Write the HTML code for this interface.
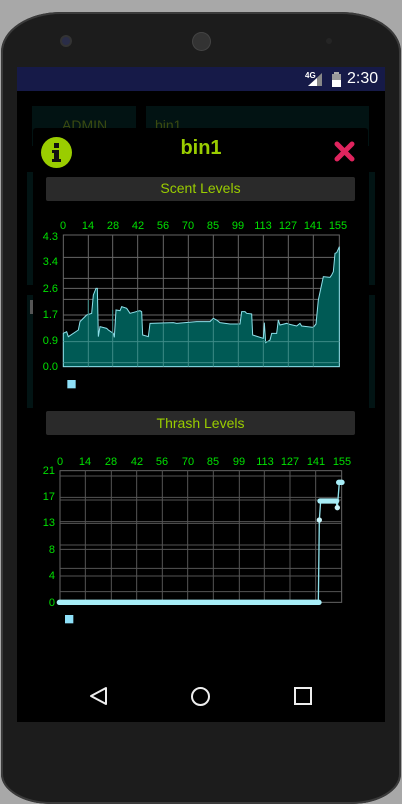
<!DOCTYPE html>
<html><head><meta charset="utf-8"><style>
html,body{margin:0;padding:0;width:402px;height:804px;overflow:hidden;background:#a8a8a8;font-family:"Liberation Sans",sans-serif}
.abs{position:absolute}
</style></head><body>
<div class="abs" style="left:0;top:0;width:402px;height:804px;background:#a8a8a8"></div>
<div class="abs" style="left:1px;top:12px;width:400px;height:792px;background:#1c1c1c;border-radius:60px 60px 50px 50px/40px 40px 30px 30px;box-shadow:inset 0 0 0 2px #3a3a3a"></div>
<div class="abs" style="left:62px;top:37px;width:8px;height:8px;border-radius:50%;background:#2a2d48;box-shadow:0 0 0 2px #333"></div>
<div class="abs" style="left:193px;top:33px;width:17px;height:17px;border-radius:50%;background:#333;box-shadow:0 0 0 1px #444"></div>
<div class="abs" style="left:326px;top:38px;width:6px;height:6px;border-radius:50%;background:#252525"></div>
<!-- screen -->
<div class="abs" style="left:17px;top:67px;width:368px;height:655px;background:#000"></div>
<div class="abs" style="left:17px;top:67px;width:368px;height:24px;background:#161a48"></div>
<div class="abs" style="left:305px;top:71px;color:#fff;font-size:8px;font-weight:bold">4G</div>
<svg class="abs" style="left:308px;top:73px" width="16" height="14"><polygon points="0,13 14,13 14,0" fill="#888"/><polygon points="0,13 9,13 9,5" fill="#fff"/></svg>
<svg class="abs" style="left:331px;top:72px" width="11" height="15"><rect x="3" y="0" width="5" height="2" fill="#aaa"/><rect x="1" y="2" width="9" height="13" fill="#999"/><rect x="1" y="8" width="9" height="7" fill="#fff"/></svg>
<div class="abs" style="left:347px;top:70px;color:#fff;font-size:16px">2:30</div>
<!-- background cards -->
<div class="abs" style="left:32px;top:106px;width:104px;height:40px;background:#021313"></div>
<div class="abs" style="left:146px;top:106px;width:223px;height:40px;background:#021313"></div>
<div class="abs" style="left:62px;top:117px;color:#3a4a10;font-size:14px">ADMIN</div>
<div class="abs" style="left:155px;top:117px;color:#3a4a10;font-size:14px">bin1</div>
<div class="abs" style="left:27px;top:172px;width:6px;height:113px;background:#021414"></div>
<div class="abs" style="left:27px;top:295px;width:6px;height:113px;background:#021414"></div>
<div class="abs" style="left:369px;top:172px;width:6px;height:113px;background:#021414"></div>
<div class="abs" style="left:369px;top:295px;width:6px;height:113px;background:#021414"></div>
<div class="abs" style="left:30px;top:300px;width:3px;height:14px;background:#555"></div>
<!-- dialog -->
<div class="abs" style="left:33px;top:128px;width:335px;height:518px;background:#000;border-radius:3px"></div>
<svg class="abs" style="left:40px;top:136px" width="33" height="33"><circle cx="16.5" cy="16.5" r="15.5" fill="#9acd00"/><rect x="14" y="7" width="5" height="5" fill="#111"/><rect x="14" y="14" width="5" height="12" fill="#111"/><rect x="12" y="14" width="3" height="3" fill="#111"/><rect x="12" y="23" width="9" height="3" fill="#111"/></svg>
<div class="abs" style="left:0;width:402px;top:137px;text-align:center;color:#9acd00;font-size:20px;font-weight:bold">bin1</div>
<svg class="abs" style="left:334px;top:141px" width="21" height="21"><path d="M3 3L18 18M18 3L3 18" stroke="#e0245e" stroke-width="5" stroke-linecap="round"/></svg>
<div class="abs" style="left:46px;top:177px;width:309px;height:24px;background:#2a2a2a;border-radius:2px;color:#9acd00;font-size:14px;text-align:center;line-height:22px">Scent Levels</div>
<div class="abs" style="left:46px;top:411px;width:309px;height:24px;background:#2a2a2a;border-radius:2px;color:#9acd00;font-size:14px;text-align:center;line-height:24px">Thrash Levels</div>
<svg class="abs" style="left:0;top:0" width="402" height="804" font-family="Liberation Sans" font-size="11" fill="#00e000">
<g transform="translate(30,200) scale(0.33333)">
<rect x="100" y="105" width="828" height="395" fill="none" stroke="#666" stroke-width="3"/>
<g stroke="#666" stroke-width="3">
<path d="M175 105V500M248 105V500M323 105V500M400 105V500M475 105V500M550 105V500M625 105V500M700 105V500M775 105V500M850 105V500"/>
<path d="M100 172H928M100 235H928M100 265H928M100 298H928M100 345H928M100 360H928M100 425H928M100 488H928"/>
</g>
<path d="M100,500 L100,400 L110,395 L115,410 L145,390 L150,365 L170,345 L185,340 L190,285 L198,265 L202,265 L205,410 L210,380 L230,385 L235,390 L250,400 L253,412 L258,330 L270,332 L275,320 L290,325 L300,340 L330,332 L335,335 L338,405 L355,410 L360,370 L430,368 L440,370 L500,365 L540,365 L550,355 L560,360 L570,368 L600,372 L630,372 L635,335 L645,335 L650,340 L665,342 L668,405 L700,415 L703,368 L707,428 L720,420 L725,400 L740,400 L745,360 L750,375 L770,370 L775,372 L800,378 L810,370 L815,378 L850,382 L858,372 L865,300 L880,230 L900,232 L905,225 L910,215 L915,160 L920,158 L928,140 L928,500 Z" fill="#005a55" stroke="#8ee0ea" stroke-width="3"/>
<g stroke="#3c8a86" stroke-width="3"><path d="M175 300V500M248 330V500M323 330V500M400 370V500M475 370V500M550 360V500M625 370V500M700 420V500M775 370V500M850 380V500M100 425H928M100 488H928"/></g>
<rect x="112" y="540" width="25" height="25" fill="#8ee0f8"/>
</g>
<g text-anchor="middle">
<text x="63" y="229">0</text><text x="88" y="229">14</text><text x="113" y="229">28</text><text x="138" y="229">42</text><text x="163" y="229">56</text><text x="188" y="229">70</text><text x="213" y="229">85</text><text x="238" y="229">99</text><text x="263" y="229">113</text><text x="288" y="229">127</text><text x="313" y="229">141</text><text x="338" y="229">155</text>
</g>
<g text-anchor="end">
<text x="58" y="240">4.3</text><text x="58" y="265">3.4</text><text x="58" y="292">2.6</text><text x="58" y="318">1.7</text><text x="58" y="344">0.9</text><text x="58" y="370">0.0</text>
</g>
<g transform="translate(30,440) scale(0.33333)">
<rect x="90" y="92" width="845" height="395" fill="none" stroke="#666" stroke-width="3"/>
<g stroke="#555" stroke-width="3">
<path d="M166 92V487M244 92V487M320 92V487M397 92V487M473 92V487M550 92V487M628 92V487M703 92V487M780 92V487M857 92V487"/>
<path d="M90 108H935M90 172H935M90 180H935M90 245H935M90 250H935M90 315H935M90 328H935M90 385H935M90 408H935M90 455H935"/>
</g>
<path d="M90,487 L865,487 L868,240 L872,183 L918,183 L922,203 L928,127 L935,127" fill="none" stroke="#8ee0ea" stroke-width="4"/>
<path d="M88,487 L867,487" stroke="#a8eef8" stroke-width="16" stroke-linecap="round"/>
<path d="M870,183 L920,183" stroke="#a8eef8" stroke-width="16" stroke-linecap="round"/>
<path d="M926,127 L936,127" stroke="#a8eef8" stroke-width="16" stroke-linecap="round"/>
<circle cx="868" cy="240" r="8" fill="#c8f4fa"/><circle cx="922" cy="203" r="8" fill="#c8f4fa"/>
<rect x="105" y="525" width="25" height="25" fill="#8ee0f8"/>
</g>
<g text-anchor="middle">
<text x="60" y="465">0</text><text x="85" y="465">14</text><text x="111" y="465">28</text><text x="137" y="465">42</text><text x="162" y="465">56</text><text x="188" y="465">70</text><text x="213" y="465">85</text><text x="239" y="465">99</text><text x="265" y="465">113</text><text x="290" y="465">127</text><text x="316" y="465">141</text><text x="342" y="465">155</text>
</g>
<g text-anchor="end">
<text x="55" y="474">21</text><text x="55" y="500">17</text><text x="55" y="526">13</text><text x="55" y="553">8</text><text x="55" y="579">4</text><text x="55" y="606">0</text>
</g>
</svg>
<!-- nav bar -->
<svg class="abs" style="left:0;top:680" width="402" height="30" fill="none" stroke="#eee" stroke-width="2">
<path d="M106 8L91 16L106 24Z" stroke-linejoin="round"/>
<circle cx="200.5" cy="16.5" r="8.5"/>
<rect x="295" y="8" width="16" height="16"/>
</svg>
</body></html>
